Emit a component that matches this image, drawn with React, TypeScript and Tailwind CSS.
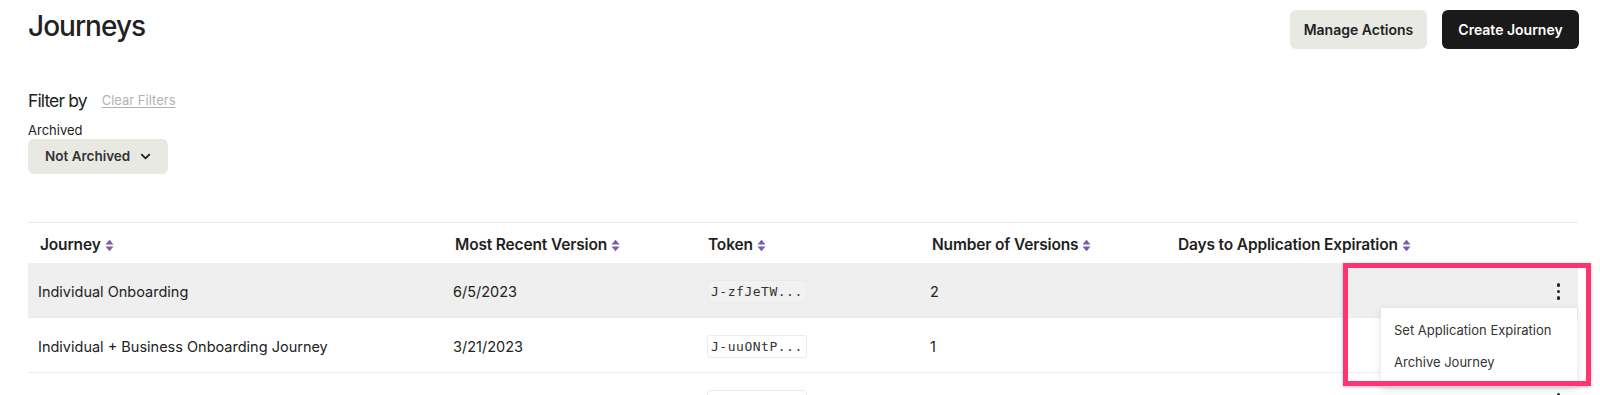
import { ChevronDown } from 'lucide-react';

type Journey = {
  name: string;
  version: string;
  token: string;
  count: string;
};

const journeys: Journey[] = [
  { name: 'Individual Onboarding', version: '6/5/2023', token: 'J-zfJeTW...', count: '2' },
  { name: 'Individual + Business Onboarding Journey', version: '3/21/2023', token: 'J-uuONtP...', count: '1' },
  { name: 'Business Onboarding', version: '1/12/2023', token: 'J-ZWTEbL...', count: '1' },
];

const cols = 'grid grid-cols-[415px_253px_224px_246px_1fr]';

function SortIcon() {
  return (
    <svg width="9" height="13" viewBox="0 0 9 13" className="ml-[4px] shrink-0">
      <path d="M0.5 5.5 L4.5 0.8 L8.5 5.5 Z" fill="#7a5ba6" />
      <path d="M0.5 7.5 L4.5 12.2 L8.5 7.5 Z" fill="#7a5ba6" />
    </svg>
  );
}

function Kebab() {
  return (
    <div className="flex flex-col items-center gap-[3px]">
      <span className="w-[3.5px] h-[3.5px] rounded-full bg-[#222]" />
      <span className="w-[3.5px] h-[3.5px] rounded-full bg-[#222]" />
      <span className="w-[3.5px] h-[3.5px] rounded-full bg-[#222]" />
    </div>
  );
}

function HeaderCell({ label }: { label: string }) {
  return (
    <div className="flex items-center pl-3 text-[15.5px] font-semibold text-[#1f1f1f] tracking-[-0.01em]">
      {label}
      <SortIcon />
    </div>
  );
}

export default function App() {
  return (
    <div className="relative min-h-[395px] bg-white font-['Inter',sans-serif] text-[#222]">
      {/* Header */}
      <div className="flex items-start justify-between pl-7 pr-[21px] pt-[9px]">
        <h1 className="text-[28px] leading-[34px] font-medium tracking-[-0.035em] text-[#222]">Journeys</h1>
        <div className="flex gap-[15px] mt-[1px]">
          <button className="w-[137px] h-[39px] rounded-md bg-[#e9e9e4] text-[14px] font-semibold text-[#222]">
            Manage Actions
          </button>
          <button className="w-[137px] h-[39px] rounded-md bg-[#1a1a1a] text-[14px] font-semibold text-white">
            Create Journey
          </button>
        </div>
      </div>

      {/* Filters */}
      <div className="px-7 mt-[41px]">
        <div className="flex items-center h-[22px]">
          <span className="text-[17.5px] tracking-[-0.05em] text-[#222]">Filter by</span>
          <span className="ml-[15px] text-[13px] text-[#b3b3b3] underline underline-offset-2">Clear Filters</span>
        </div>
        <div className="mt-[10px] text-[13px] leading-[16px] text-[#222]">Archived</div>
        <button className="mt-[1px] flex items-center w-[140px] h-[35px] rounded-md bg-[#e9e9e4] pl-[17px] text-[13.5px] font-semibold text-[#333]">
          Not Archived
          <ChevronDown size={15} strokeWidth={3} className="ml-[8px] text-[#222]" />
        </button>
      </div>

      {/* Table */}
      <div className="ml-7 mr-[22px] mt-[48px] border-t border-[#e6e6e6]">
        <div className={`${cols} h-[40px] pt-[4px]`}>
          <HeaderCell label="Journey" />
          <HeaderCell label="Most Recent Version" />
          <HeaderCell label="Token" />
          <HeaderCell label="Number of Versions" />
          <HeaderCell label="Days to Application Expiration" />
        </div>

        {journeys.map((j, i) => (
          <div
            key={j.token}
            className={`${cols} h-[55px] pt-[3px] border-b border-[#ececec] text-[14.5px] text-[#222] ${i === 0 ? 'bg-[#efefef]' : 'bg-white'}`}
          >
            <div className="flex items-center pl-[10px]">{j.name}</div>
            <div className="flex items-center pl-[10px]">{j.version}</div>
            <div className="flex items-center pl-[11px]">
              <code
                className={`px-[3px] h-[23px] flex items-center whitespace-nowrap rounded-[3px] border font-['DejaVu_Sans_Mono',monospace] text-[13px] tracking-[0.04em] text-[#333] ${
                  i === 0 ? 'border-[#eaeaea] bg-[#f1f1f1]' : 'border-[#ebebeb] bg-white'
                }`}
              >
                {j.token}
              </code>
            </div>
            <div className="flex items-center pl-[10px]">{j.count}</div>
            <div className="relative flex items-center justify-end pr-[18px]">
              <Kebab />
              {i === 0 && (
                <div className="absolute top-[42px] right-[1px] z-10 w-[196px] bg-white pt-[7px] pb-[8px] shadow-[0_2px_8px_rgba(0,0,0,0.12)]">
                  <div className="h-[32px] flex items-center pl-[13px] text-[13px] text-[#333]">Set Application Expiration</div>
                  <div className="h-[32px] flex items-center pl-[13px] text-[13px] text-[#333]">Archive Journey</div>
                </div>
              )}
            </div>
          </div>
        ))}
      </div>

      {/* Annotation highlight */}
      <div className="absolute left-[1343px] top-[263px] w-[248px] h-[123px] z-20 border-[5px] border-[#ff3470] shadow-[0_1px_3px_rgba(0,0,0,0.25)] pointer-events-none" />
    </div>
  );
}
